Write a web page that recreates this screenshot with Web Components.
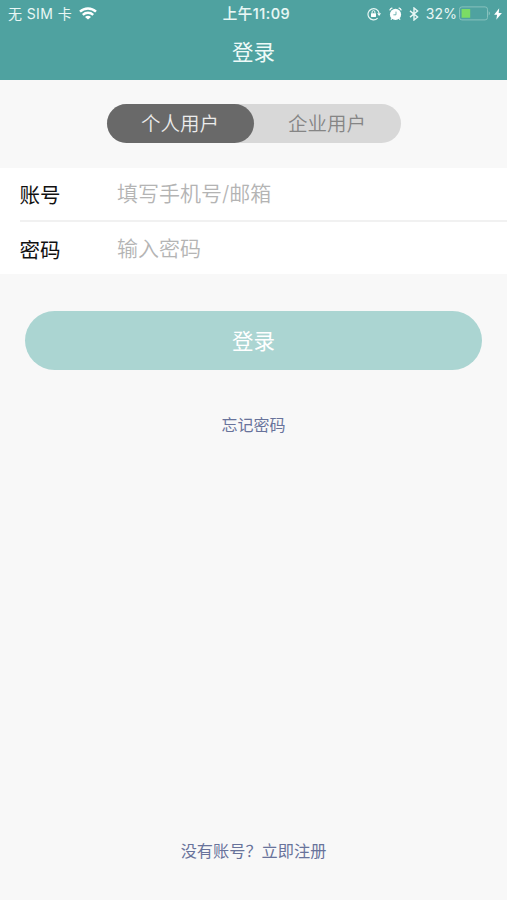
<!DOCTYPE html>
<html lang="zh-CN">
<head>
<meta charset="utf-8">
<title>登录</title>
<style>
  body { margin: 0; background: #f8f8f8; font-family: Inter, "Noto Sans CJK SC", sans-serif; }
</style>
</head>
<body>
<login-page></login-page>
<script>
const define = (name, html) => customElements.define(name, class extends HTMLElement {
  constructor() {
    super();
    this.attachShadow({ mode: 'open' }).innerHTML = html;
  }
});

define('status-bar', `
  <style>
    :host { display: grid; grid-template-columns: 1fr auto 1fr; align-items: center; height: 28px;
      padding: 0 5px 0 8px; color: #e9f7f5; font-size: 14px; line-height: 28px; white-space: nowrap; }
    .left, .right { display: flex; align-items: center; }
    .left { letter-spacing: .4px; }
    .left svg { margin: -1px 0 0 7px; }
    .right { justify-content: flex-end; }
    .time { font-weight: 500; font-size: 14.5px; letter-spacing: .5px; padding-left: 3px; -webkit-text-stroke: .1px; }
    .pct { margin: 0 2px 0 7px; letter-spacing: .1px; }
    svg { display: block; flex: none; }
  </style>
  <div class="left"><span>无 SIM 卡</span>
    <svg width="18" height="13" viewBox="0 0 18 13" fill="none" stroke="#fff" stroke-width="2.4">
      <path d="M1 4.700C5.500.4 12.500.4 17 4.700M3.800 7.900c3-2.800 7.400-2.800 10.400 0"/>
      <path d="M9 12.600 6 9.900c1.700-1.500 4.300-1.500 6 0z" fill="#fff" stroke="none"/>
    </svg>
  </div>
  <span class="time">上午11:09</span>
  <div class="right">
    <svg width="14" height="14" viewBox="0 0 14 14" style="margin-top:-1px" fill="none" stroke="#e9f7f5" stroke-width="1.200">
      <path d="M10.600 11.200A5.600 5.600 0 1 1 12.100 6.200"/>
      <path d="M10.200 6.200h3.800l-1.900 2.800z" fill="#fff" stroke="none"/>
      <rect x="4" y="6.200" width="5" height="3.800" rx=".4" fill="#fff" stroke="none"/>
      <path d="M5.100 6.400V5a1.400 1.400 0 0 1 2.800 0v1.400" stroke-width="1"/>
    </svg>
    <svg style="margin:-1px 0 0 8px" width="13" height="14" viewBox="0 0 13 14">
      <circle cx="6.500" cy="7.400" r="5.600" fill="#fff"/>
      <path d="M.9 3.500a2 2 0 0 1 2.600-2.400M12.100 3.500a2 2 0 0 0-2.600-2.400" fill="#fff" stroke="#fff" stroke-width=".8"/>
      <path d="m2.900 11.300-1 1.400M10.100 11.300l1 1.400" stroke="#fff" stroke-width="1.200"/>
      <path d="M7 4.600v3.200H4.400" fill="none" stroke="#4fa2a0" stroke-width=".8"/>
    </svg>
    <svg style="margin:-1px 0 0 7px" width="10" height="14" viewBox="0 0 10 14" fill="none" stroke="#e9f7f5" stroke-width="1.400">
      <path d="M1 3.900 8.600 10 5 13V1l3.600 3L1 10.100"/>
    </svg>
    <span class="pct">32%</span>
    <svg width="33" height="15" viewBox="0 0 33 15" style="margin-top:-1px">
      <rect x=".5" y=".9" width="28" height="13" rx="2.400" fill="none" stroke="#88c2be" stroke-width="1"/>
      <rect x="2.600" y="3" width="8.600" height="8.800" rx=".4" fill="#7bdc65"/>
      <path d="M29.700 5.300c1.800.8 1.800 3.400 0 4.200z" fill="#88c2be"/>
    </svg>
    <svg style="margin:-1px 0 0 2px" width="8" height="12" viewBox="0 0 8 12"><path d="M5.200.2.100 6.800h3L2.300 11.800 7.900 4.900H4.700z" fill="#fff"/></svg>
  </div>`);

define('nav-header', `
  <style>
    :host { display: block; height: 80px; background: #4fa2a0; color: #eefaf8; }
    h1 { margin: 0; height: 47px; line-height: 48px; text-align: center; font-size: 21.500px; font-weight: 400; }
  </style>
  <status-bar></status-bar><h1><slot></slot></h1>`);

define('segment-tabs', `
  <style>
    :host { display: flex; width: 294px; height: 39px; margin: 24px auto 0; border-radius: 20px; background: #d8d8d8; }
  </style><slot></slot>`);

define('segment-tab', `
  <style>
    :host { flex: 1; border-radius: 20px; text-align: center; line-height: 41px; font-size: 19.500px;
      font-weight: 350; color: #858585; }
    :host([selected]) { background: #696969; color: #ececec; }
  </style><slot></slot>`);

define('form-group', `
  <style>:host { display: block; margin-top: 25px; background: #fff; height: 106px; }</style><slot></slot>`);

define('form-field', `
  <style>
    :host { display: flex; align-items: center; box-sizing: border-box; height: 52px; margin-left: 20px; line-height: 52px; padding-top: 2px; }
    :host([divided]) { height: 54px; border-bottom: 2px solid #f1f1f1; padding-top: 0; }
    .label { width: 97px; font-size: 20.500px; color: #111; padding-top: 3px; text-indent: -.5px; }
    .hint { font-size: 21px; font-weight: 350; color: #b4b4b4; }
  </style>
  <span class="label"><slot name="label"></slot></span><span class="hint"><slot></slot></span>`);

define('submit-button', `
  <style>
    :host { display: block; margin: 37px 25px 0; height: 59px; border-radius: 30px; background: #abd5d2;
      color: #fff; text-align: center; font-size: 21.500px; line-height: 61px; }
  </style><slot></slot>`);

define('text-link', `
  <style>:host { display: block; text-align: center; font-size: 16px; line-height: 24px; color: #68739b; }</style><slot></slot>`);

define('login-page', `
  <style>
    :host { display: flex; flex-direction: column; height: 900px; overflow: hidden; }
    .forgot { margin-top: 43px; }
    .register { margin: auto 0 37px; font-size: 16.200px; }
  </style>
  <nav-header>登录</nav-header>
  <segment-tabs><segment-tab selected>个人用户</segment-tab><segment-tab>企业用户</segment-tab></segment-tabs>
  <form-group>
    <form-field divided><span slot="label">账号</span>填写手机号/邮箱</form-field>
    <form-field><span slot="label">密码</span>输入密码</form-field>
  </form-group>
  <submit-button>登录</submit-button>
  <text-link class="forgot">忘记密码</text-link>
  <text-link class="register">没有账号？立即注册</text-link>`);
</script>
</body>
</html>
